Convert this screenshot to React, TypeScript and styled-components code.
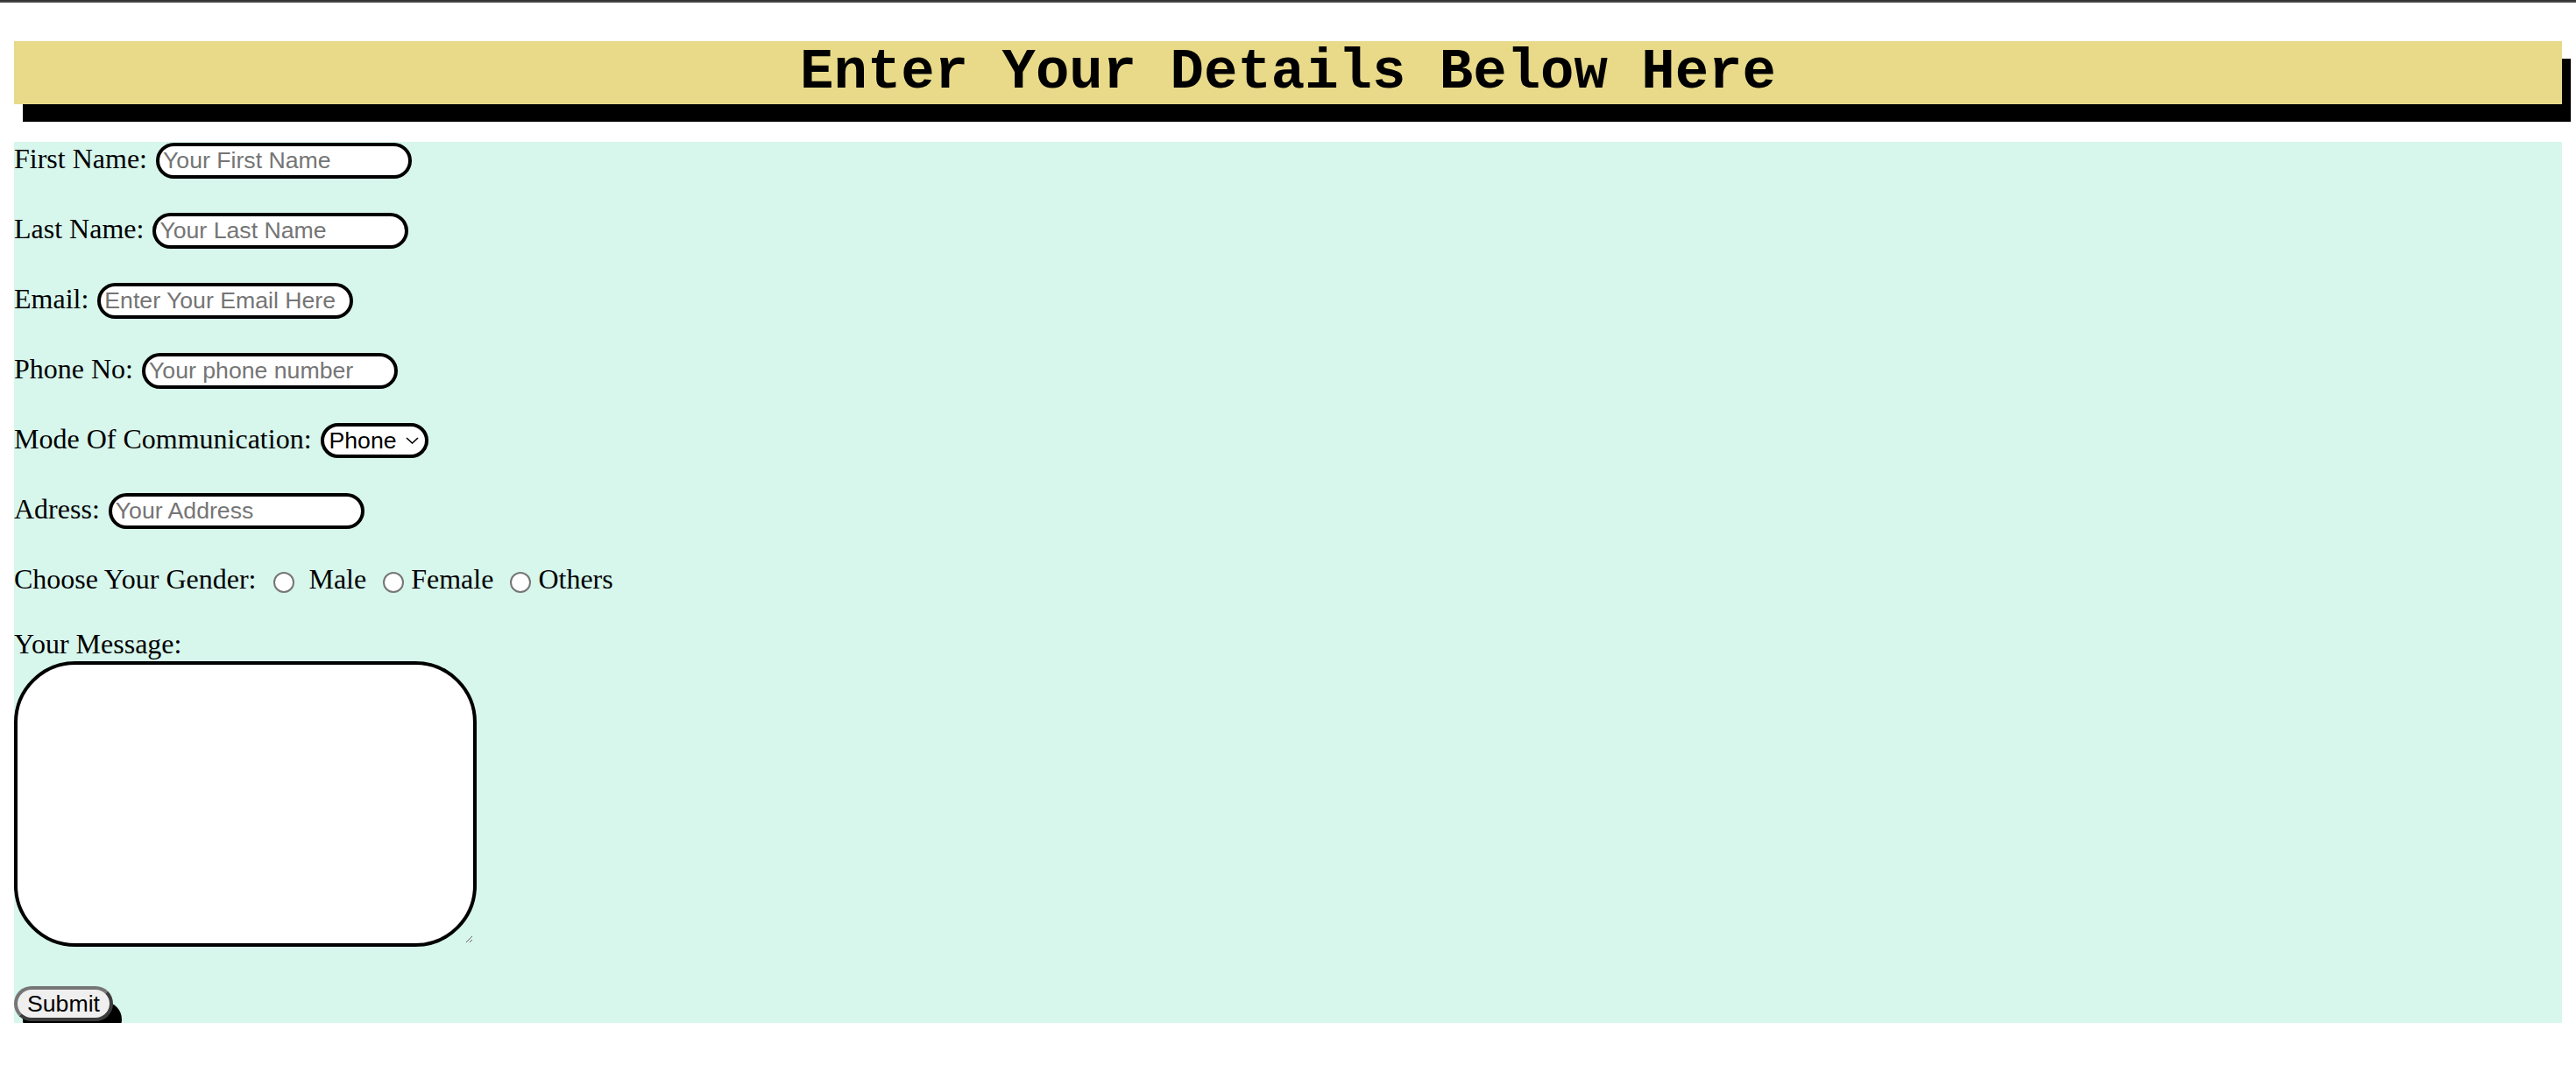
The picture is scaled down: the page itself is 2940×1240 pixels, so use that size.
import React from "react";
import styled, { createGlobalStyle } from "styled-components";

const GlobalStyle = createGlobalStyle`
  html,
  body {
    margin: 0;
    padding: 0;
    background: #fff;
  }
  body {
    font-family: "Liberation Serif", "Times New Roman", serif;
    font-size: 32px;
    color: #000;
  }
`;

const TopEdge = styled.div`
  height: 3px;
  background: linear-gradient(#2b2b2b, #575757);
`;

const Page = styled.div`
  padding: 0 16px;
`;

const Title = styled.h1`
  margin: 44px 0 43px;
  background: #e8da89;
  box-shadow: 10px 20px 0 #000;
  font-family: "Liberation Mono", "Courier New", monospace;
  font-weight: 700;
  font-size: 64px;
  line-height: 72px;
  text-align: center;
`;

const Form = styled.form`
  background: #d7f6ec;
  padding: 1px 0 2px;
  display: flex;
  flex-direction: column;
  gap: 32px;
`;

const Row = styled.div`
  display: flex;
  align-items: flex-start;
  height: 48px;
`;

const Label = styled.label`
  white-space: nowrap;
`;

const TextInput = styled.input`
  box-sizing: border-box;
  width: 292px;
  height: 41px;
  margin: 0 0 0 10px;
  padding: 0 4px;
  border: 4px solid #000;
  border-radius: 21px;
  background: #fff;
  font-family: "Liberation Sans", Arial, sans-serif;
  font-size: 26.67px;
  color: #000;
  outline: none;
  &::placeholder {
    color: #757575;
  }
`;

const SelectWrap = styled.span`
  position: relative;
  display: inline-block;
  height: 40px;
  margin-left: 10px;
`;

const Select = styled.select`
  appearance: none;
  box-sizing: border-box;
  width: 123px;
  height: 40px;
  margin: 0;
  padding: 0 30px 0 6px;
  border: 4px solid #000;
  border-radius: 20px;
  background: #fff;
  font-family: "Liberation Sans", Arial, sans-serif;
  font-size: 26.67px;
  color: #000;
  outline: none;
`;

const Chevron = styled.svg`
  position: absolute;
  right: 11px;
  top: 16px;
  width: 15px;
  height: 8px;
  pointer-events: none;
`;

const Radio = styled.input.attrs({ type: "radio" })<{ $gap: number }>`
  appearance: none;
  box-sizing: border-box;
  width: 24px;
  height: 24px;
  margin: 10px 0 0 ${(p) => p.$gap}px;
  border: 2px solid #767676;
  border-radius: 50%;
  background: #fff;
  flex: none;
`;

const Option = styled.span<{ $gap: number }>`
  margin-left: ${(p) => p.$gap}px;
  white-space: nowrap;
`;

const MessageBlock = styled.div`
  display: flex;
  flex-direction: column;
  align-items: flex-start;
`;

const MessageLabel = styled.label`
  margin-top: -6px;
  white-space: nowrap;
`;

const MessageArea = styled.textarea`
  box-sizing: border-box;
  width: 528px;
  height: 326px;
  margin: 1px 0 13px;
  padding: 10px 24px;
  border: 4px solid #000;
  border-radius: 70px;
  background: #fff;
  font-family: "Liberation Mono", monospace;
  font-size: 24px;
  outline: none;
`;

const SubmitButton = styled.button`
  align-self: flex-start;
  box-sizing: border-box;
  height: 40px;
  margin: 0;
  padding: 0 11px;
  border: 4px solid #767676;
  border-right-color: #3c3c3c;
  border-bottom-color: #3c3c3c;
  border-radius: 20px;
  background: #efefef;
  box-shadow: 10px 18px 0 #000;
  font-family: "Liberation Sans", Arial, sans-serif;
  font-size: 26.67px;
  color: #000;
  line-height: 1;
`;

const fields = [
  { label: "First Name:", placeholder: "Your First Name", type: "text" },
  { label: "Last Name:", placeholder: "Your Last Name", type: "text" },
  { label: "Email:", placeholder: "Enter Your Email Here", type: "email" },
  { label: "Phone No:", placeholder: "Your phone number", type: "tel" },
];

export default function App() {
  return (
    <>
      <GlobalStyle />
      <TopEdge />
      <Page>
        <Title>Enter Your Details Below Here</Title>
        <Form onSubmit={(e) => e.preventDefault()}>
          {fields.map((f) => (
            <Row key={f.label}>
              <Label>{f.label}</Label>
              <TextInput type={f.type} placeholder={f.placeholder} />
            </Row>
          ))}
          <Row>
            <Label>Mode Of Communication:</Label>
            <SelectWrap>
              <Select defaultValue="phone">
                <option value="phone">Phone</option>
                <option value="email">Email</option>
              </Select>
              <Chevron viewBox="0 0 15 8">
                <polyline
                  points="1,1 7.5,7 14,1"
                  fill="none"
                  stroke="#000"
                  strokeWidth="1.6"
                />
              </Chevron>
            </SelectWrap>
          </Row>
          <Row>
            <Label>Adress:</Label>
            <TextInput type="text" placeholder="Your Address" />
          </Row>
          <Row>
            <Label>Choose Your Gender:</Label>
            <Radio name="gender" $gap={20} />
            <Option $gap={16}>Male</Option>
            <Radio name="gender" $gap={19} />
            <Option $gap={8}>Female</Option>
            <Radio name="gender" $gap={19} />
            <Option $gap={8}>Others</Option>
          </Row>
          <MessageBlock>
            <MessageLabel>Your Message:</MessageLabel>
            <MessageArea />
          </MessageBlock>
          <SubmitButton type="submit">Submit</SubmitButton>
        </Form>
      </Page>
    </>
  );
}
